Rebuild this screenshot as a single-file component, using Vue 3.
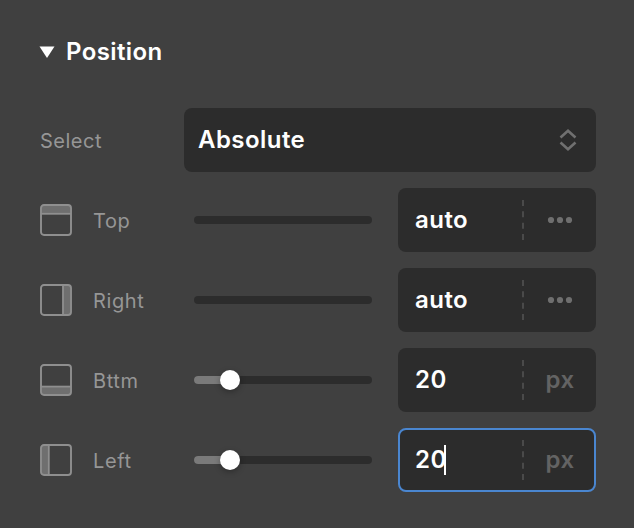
<template>
  <div class="panel">
    <div class="title">
      <svg class="caret" width="16" height="12" viewBox="0 0 16 12"><path d="M0.5 0.5H15.5L8 12Z" fill="#fff" /></svg>
      <span class="lift">Position</span>
    </div>

    <div class="select-row">
      <span class="select-label">Select</span>
      <div class="select">
        <span class="lift">Absolute</span>
        <svg width="18" height="22" viewBox="0 0 18 22" fill="none" stroke="#707070" stroke-width="2.6">
          <path d="M1.5 8.5L9 1.8L16.5 8.5" />
          <path d="M1.5 13.5L9 20.2L16.5 13.5" />
        </svg>
      </div>
    </div>

    <div v-for="row in rows" :key="row.label" class="row">
      <svg class="side-icon" width="32" height="32" viewBox="0 0 32 32">
        <path :d="row.fill" fill="#6f6f6f" />
        <rect x="1" y="1" width="30" height="30" rx="3" fill="none" stroke="#8f8f8f" stroke-width="1.9" />
        <path :d="row.line" stroke="#8f8f8f" stroke-width="1.8" fill="none" />
      </svg>
      <span class="label">{{ row.label }}</span>
      <div class="slider">
        <template v-if="row.value != null">
          <div class="slider-fill"></div>
          <div class="thumb"></div>
        </template>
      </div>
      <div class="box" :class="{ focused: row.focused }">
        <div class="value">
          <span class="lift">{{ row.text }}</span>
          <i v-if="row.focused" class="cursor"></i>
        </div>
        <div class="unit">
          <span v-if="row.unit" class="lift">{{ row.unit }}</span>
          <svg v-else width="26" height="8" viewBox="0 0 26 8" fill="#6f6f6f">
            <circle cx="4" cy="4" r="3.1" /><circle cx="13" cy="4" r="3.1" /><circle cx="22" cy="4" r="3.1" />
          </svg>
        </div>
      </div>
    </div>
  </div>
</template>

<script setup>
const rows = [
  { label: "Top", text: "auto", fill: "M2 2H30V9H2Z", line: "M1 9.8H31" },
  { label: "Right", text: "auto", fill: "M23 2H30V30H23Z", line: "M23 1V31" },
  { label: "Bttm", text: "20", unit: "px", value: 20, fill: "M2 23H30V30H2Z", line: "M1 22.6H31" },
  { label: "Left", text: "20", unit: "px", value: 20, focused: true, fill: "M2 2H9V30H2Z", line: "M8.8 1V31" },
];
</script>

<style scoped>
.panel {
  width: 634px;
  height: 528px;
  box-sizing: border-box;
  padding: 36px 38px 0 40px;
  background: #404040;
  font-family: Inter, "Liberation Sans", sans-serif;
  overflow: hidden;
}

.title {
  display: flex;
  align-items: center;
  gap: 11px;
  height: 32px;
  color: #fff;
  font-size: 24px;
  font-weight: 600;
  letter-spacing: 0.4px;
}

.lift {
  padding-bottom: 2px;
}

.caret {
  margin-left: -1px;
}

.select-row {
  display: flex;
  align-items: center;
  height: 64px;
  margin-top: 40px;
}

.select-label {
  width: 144px;
  padding-top: 2px;
  color: #969696;
  font-size: 20px;
  letter-spacing: 0.5px;
}

.select {
  flex: 1;
  height: 64px;
  box-sizing: border-box;
  display: flex;
  align-items: center;
  justify-content: space-between;
  padding: 0 19px 0 14px;
  background: #2c2c2c;
  border-radius: 8px;
  color: #fff;
  font-size: 24px;
  font-weight: 600;
  letter-spacing: 0.45px;
}

.row {
  display: flex;
  align-items: center;
  height: 64px;
  margin-top: 16px;
}

.side-icon {
  flex: none;
}

.label {
  width: 101px;
  margin-left: 21px;
  padding-top: 2px;
  color: #969696;
  font-size: 20px;
  letter-spacing: 0.6px;
}

.slider {
  position: relative;
  width: 178px;
  height: 8px;
  border-radius: 4px;
  background: #2c2c2c;
}

.slider-fill {
  width: 36px;
  height: 8px;
  border-radius: 4px 0 0 4px;
  background: #7a7a7a;
}

.thumb {
  position: absolute;
  left: 26px;
  top: -6px;
  width: 20px;
  height: 20px;
  border-radius: 50%;
  background: #fff;
  box-shadow: 0 2px 6px rgba(0, 0, 0, 0.3);
}

.box {
  width: 198px;
  height: 64px;
  margin-left: 26px;
  box-sizing: border-box;
  display: flex;
  align-items: center;
  background: #2c2c2c;
  border-radius: 8px;
  color: #fff;
  font-size: 24px;
  font-weight: 600;
  letter-spacing: 0.45px;
}

.box.focused {
  border: 2px solid #4a86d0;
}

.value {
  display: flex;
  align-items: center;
  width: 126px;
  box-sizing: border-box;
  padding-left: 17px;
  height: 40px;
  border-right: 2px dashed #4a4a4a;
}

.focused .value {
  padding-left: 15px;
  width: 124px;
}

.cursor {
  width: 2px;
  height: 30px;
  margin-left: -3px;
  background: #fff;
}

.unit {
  flex: 1;
  display: flex;
  align-items: center;
  justify-content: center;
  color: #636363;
}

.focused .unit {
  padding-left: 2px;
}
</style>
